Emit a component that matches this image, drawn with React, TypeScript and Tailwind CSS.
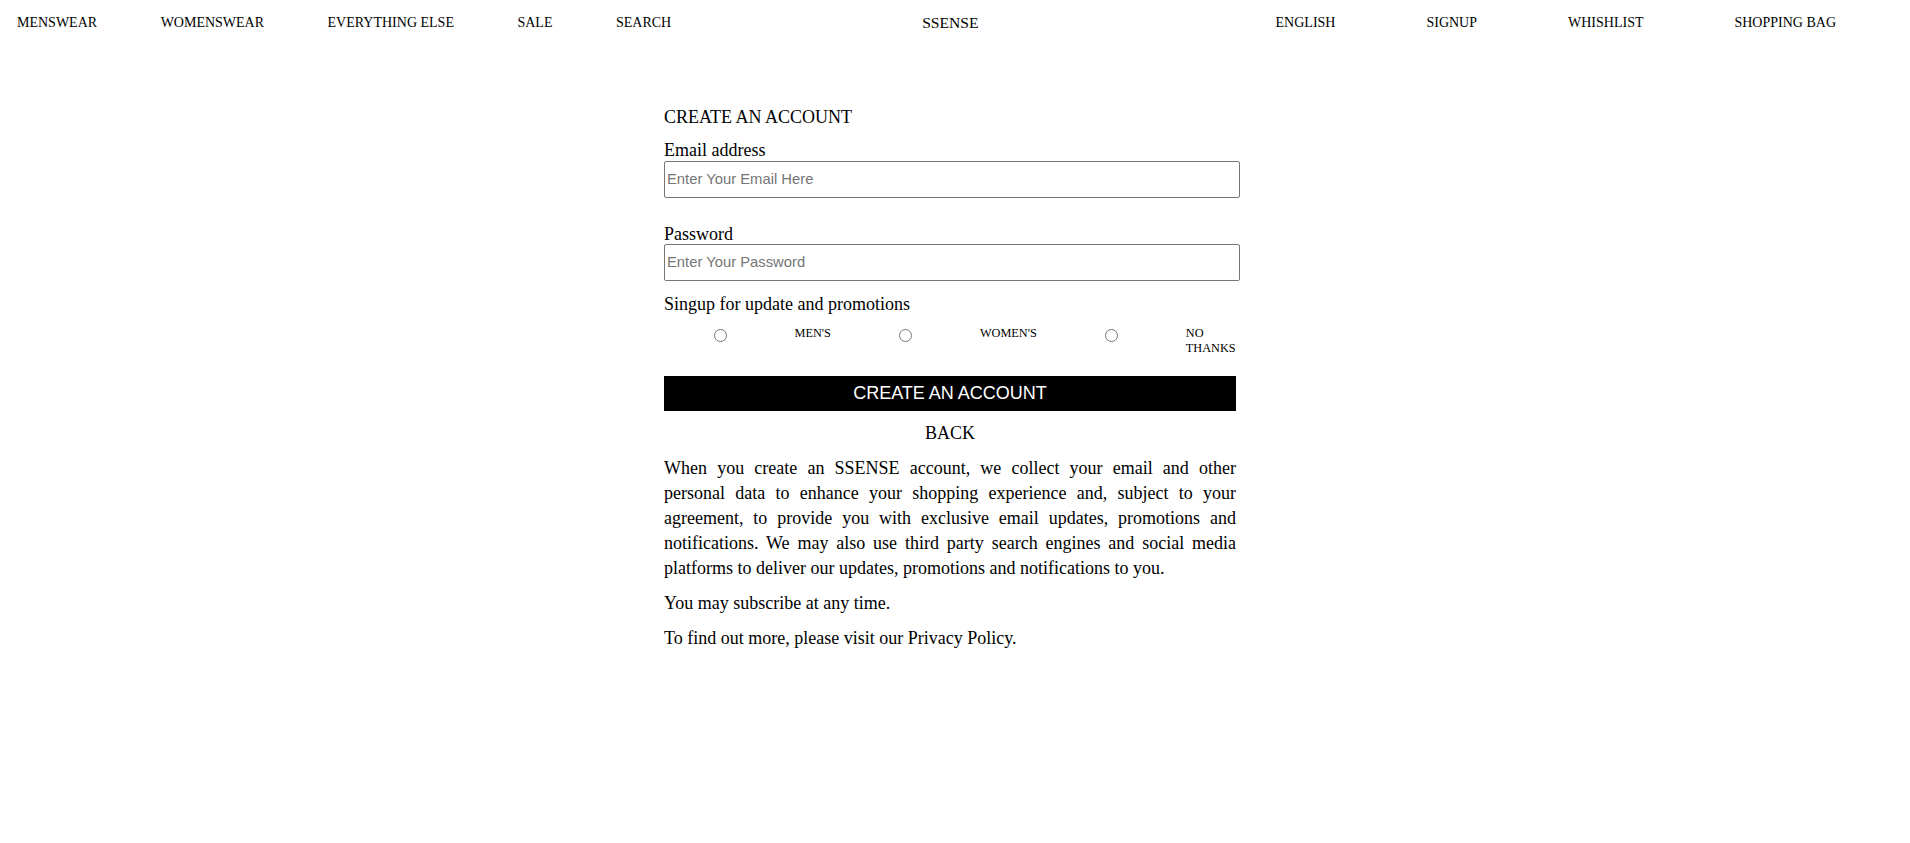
import { useState } from "react";

const leftLinks = ["MENSWEAR", "WOMENSWEAR", "EVERYTHING ELSE", "SALE", "SEARCH"];
const rightLinks = ["ENGLISH", "SIGNUP", "WHISHLIST", "SHOPPING BAG"];

function NavBar() {
  return (
    <nav className="flex h-[45px] items-center text-[14px] text-black">
      <div className="flex gap-[63.5px] pl-[17px]">
        {leftLinks.map((l) => (
          <a key={l} href="#" className="whitespace-nowrap">
            {l}
          </a>
        ))}
      </div>
      <a href="#" className="ml-[251px] text-[15.6px]">
        SSENSE
      </a>
      <div className="ml-auto flex gap-[91px] pr-[74px]">
        {rightLinks.map((l) => (
          <a key={l} href="#" className="whitespace-nowrap">
            {l}
          </a>
        ))}
      </div>
    </nav>
  );
}

export default function App() {
  const [pref, setPref] = useState("");
  const options = [
    { id: "mens", label: "MEN'S" },
    { id: "womens", label: "WOMEN'S" },
    { id: "none", label: "NO THANKS" },
  ];

  return (
    <div className="min-h-screen bg-white font-['Liberation_Serif','Times_New_Roman',serif] text-black">
      <NavBar />

      <main className="ml-[664px] w-[572px] pt-[62px] text-[18px]">
        <h1 className="leading-[20px]">CREATE AN ACCOUNT</h1>

        <form className="mt-[13px] flex flex-col" onSubmit={(e) => e.preventDefault()}>
          <label htmlFor="email" className="leading-[20px]">
            Email address
          </label>
          <input
            id="email"
            type="email"
            placeholder="Enter Your Email Here"
            className="mt-[0.5px] h-[37px] w-[576px] rounded-[2px] border border-[#767676] px-[2px] font-['Liberation_Sans',Arial,sans-serif] text-[14.8px] placeholder:text-[#757575]"
          />

          <label htmlFor="password" className="mt-[26px] leading-[20px]">
            Password
          </label>
          <input
            id="password"
            type="password"
            placeholder="Enter Your Password"
            className="h-[37px] w-[576px] rounded-[2px] border border-[#767676] px-[2px] font-['Liberation_Sans',Arial,sans-serif] text-[14.8px] placeholder:text-[#757575]"
          />

          <p className="mt-[13px] leading-[20px]">Singup for update and promotions</p>

          {/* radio options */}
          <div className="mt-[12px] flex items-start gap-[68px] pl-[49.5px] text-[12.3px] leading-[15px]">
            {options.map((o) => (
              <div key={o.id} className="contents">
                <input
                  type="radio"
                  name="pref"
                  id={o.id}
                  checked={pref === o.id}
                  onChange={() => setPref(o.id)}
                  className="mt-[3px] h-[13px] w-[13px] shrink-0"
                />
                <label htmlFor={o.id} className={o.id === "none" ? "w-[50px]" : "whitespace-nowrap"}>
                  {o.label}
                </label>
              </div>
            ))}
          </div>

          <button
            type="submit"
            className="mt-[20.5px] h-[35px] w-[572px] bg-black font-['Liberation_Sans',Arial,sans-serif] text-[18px] text-white"
          >
            CREATE AN ACCOUNT
          </button>

          <a href="#" className="mt-[12px] text-center leading-[20px]">
            BACK
          </a>
        </form>

        <p className="mt-[13px] text-justify leading-[25px]">
          When you create an SSENSE account, we collect your email and other personal data to
          enhance your shopping experience and, subject to your agreement, to provide you with
          exclusive email updates, promotions and notifications. We may also use third party
          search engines and social media platforms to deliver our updates, promotions and
          notifications to you.
        </p>
        <p className="mt-[10px] leading-[25px]">You may subscribe at any time.</p>
        <p className="mt-[10px] leading-[25px]">To find out more, please visit our Privacy Policy.</p>
      </main>
    </div>
  );
}
